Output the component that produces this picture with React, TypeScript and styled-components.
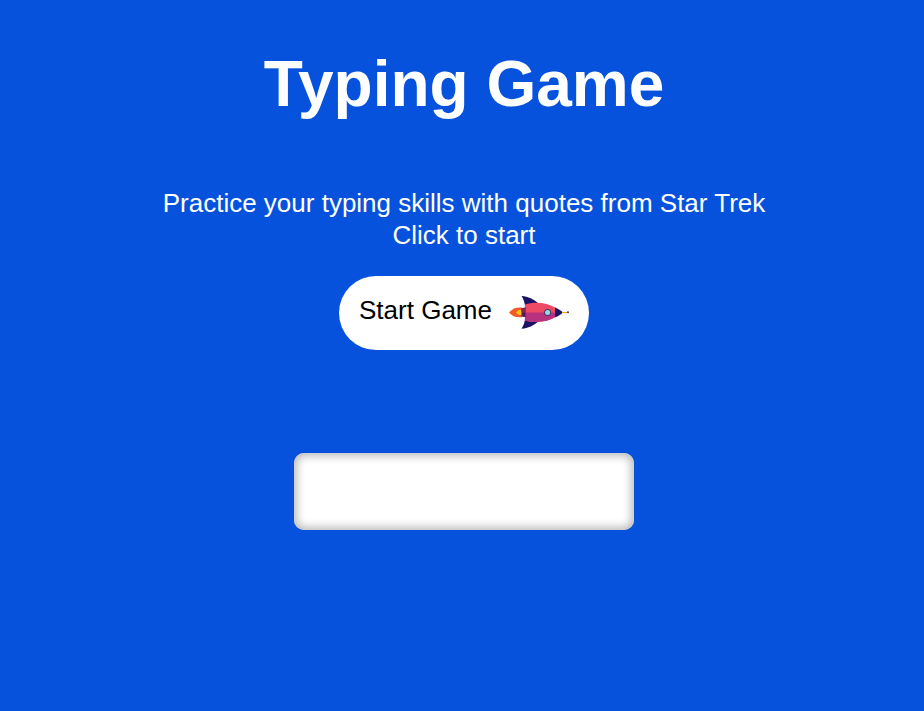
import React, { useRef, useState } from "react";
import styled, { createGlobalStyle } from "styled-components";

const GlobalStyle = createGlobalStyle`
  * { box-sizing: border-box; }
  body {
    margin: 0;
    background: #0652dd;
    font-family: "Liberation Sans", Arial, sans-serif;
  }
`;

const Page = styled.main`
  display: flex;
  flex-direction: column;
  align-items: center;
  min-height: 100vh;
  padding: 48px 0 48px 4px;
  color: #fff;
  text-align: center;
`;

const Title = styled.h1`
  margin: 0 0 67px;
  font-size: 64px;
  line-height: 72px;
`;

const Intro = styled.p`
  margin: 0 0 25px;
  font-size: 26px;
  line-height: 32px;
`;

const Line = styled.span`
  display: block;
`;

const StartButton = styled.button`
  display: flex;
  align-items: flex-start;
  gap: 17px;
  margin: 0 0 103px;
  padding: 18px 20px 20px;
  border: 0;
  border-radius: 40px;
  background: #fff;
  color: #000;
  font-family: inherit;
  font-size: 26px;
  line-height: 32px;
  cursor: pointer;
`;

const RocketArt = styled.svg`
  width: 60px;
  height: 36px;
`;

const TypingInput = styled.input`
  width: 340px;
  max-width: 100%;
  height: 77px;
  padding: 20px;
  border: 0;
  border-radius: 10px;
  outline: 0;
  background: #fff;
  box-shadow: inset 0 0 8px 3px #bbb;
  color: #000;
  font-family: inherit;
  font-size: 26px;
`;

function Rocket() {
  return (
    <RocketArt viewBox="0 0 60 36" aria-hidden="true">
      <path d="M0 18.4C3 15 7 13 13 13.600V23.200C7 23.800 3 22 0 18.400Z" fill="#f15a24" />
      <path d="M7 18.400C8.500 16.500 10 15.800 13 15.800V21C10 21 8.500 20.400 7 18.400Z" fill="#ffc20e" />
      <path d="M12.500 2C19 2.500 25 5 30 10L16 13C16 9 14.500 5 12.500 2Z" fill="#1b1464" />
      <path d="M12.500 34.800C19 34.300 25 31.800 30 26.800L16 23.800C16 27.800 14.500 31.800 12.500 34.800Z" fill="#1b1464" />
      <path d="M16 10.400C26 7.500 38 8.500 47 14V22.800C38 28.300 26 29.300 16 26.400Z" fill="#ef4a65" />
      <path d="M16 18.400H47V22.800C38 28.300 26 29.300 16 26.400Z" fill="#b83280" />
      <path d="M12.500 14.200L16.500 13.600V23.200L12.500 22.600Z" fill="#521b55" />
      <path d="M12.500 14.200L16.500 13.600V18.400H12.500Z" fill="#80284f" />
      <path d="M46 13.500C49 14.600 52 16.500 54 18.400C52 20.300 49 22.200 46 23.300Z" fill="#1b1464" />
      <path d="M53 18.500H58" stroke="#e8ad16" />
      <circle cx="59" cy="18.200" r="1" fill="#762144" />
      <circle cx="38.600" cy="18.400" r="3.500" fill="#4b356f" />
      <circle cx="38.600" cy="18.400" r="2.500" fill="#8de0dc" />
    </RocketArt>
  );
}

export default function App() {
  const [typed, setTyped] = useState("");
  const field = useRef<HTMLInputElement>(null);

  return (
    <>
      <GlobalStyle />
      <Page>
        <Title>Typing Game</Title>
        <Intro>
          <Line>Practice your typing skills with quotes from Star Trek</Line>
          <Line>Click to start</Line>
        </Intro>
        <StartButton type="button" onClick={() => field.current?.focus()}>
          Start Game
          <Rocket />
        </StartButton>
        <TypingInput
          ref={field}
          type="text"
          aria-label="Type the quote"
          value={typed}
          onChange={(event) => setTyped(event.target.value)}
        />
      </Page>
    </>
  );
}
